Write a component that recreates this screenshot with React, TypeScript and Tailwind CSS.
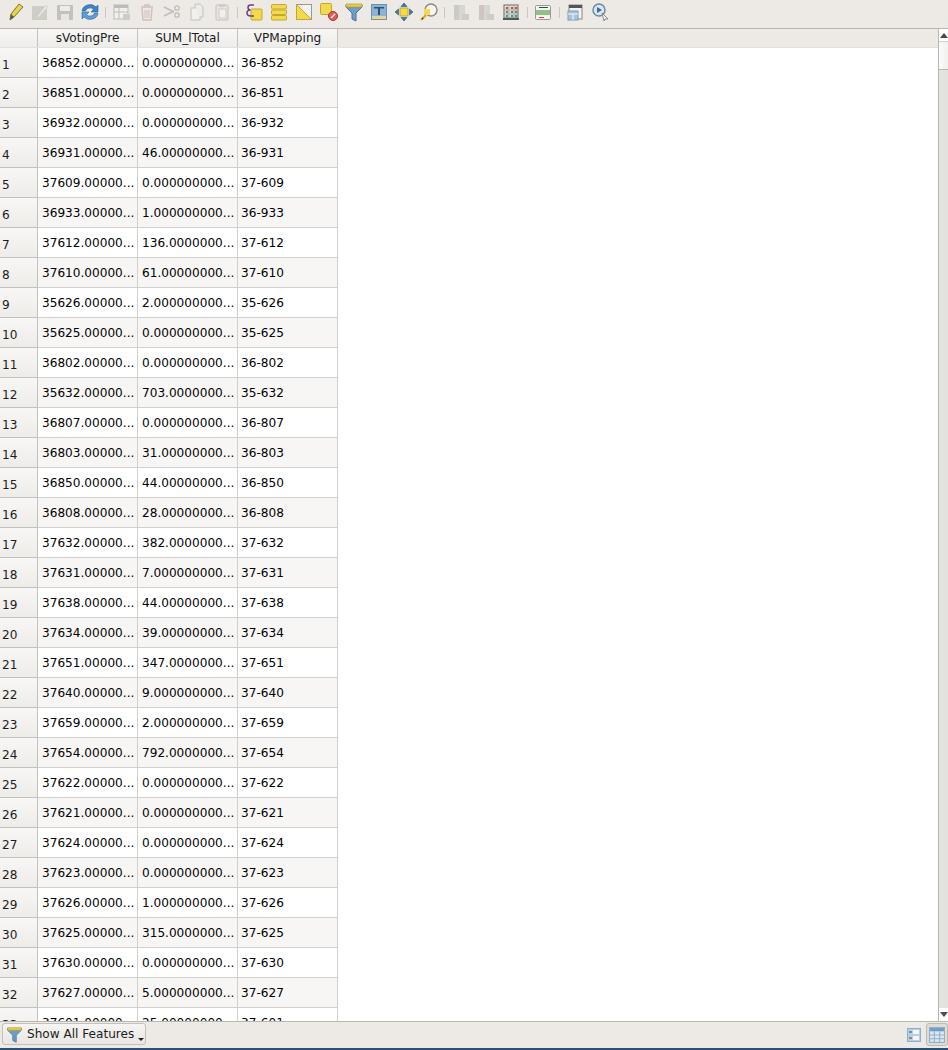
const rows = [
  ["36852.00000...", "0.000000000...", "36-852"],
  ["36851.00000...", "0.000000000...", "36-851"],
  ["36932.00000...", "0.000000000...", "36-932"],
  ["36931.00000...", "46.00000000...", "36-931"],
  ["37609.00000...", "0.000000000...", "37-609"],
  ["36933.00000...", "1.000000000...", "36-933"],
  ["37612.00000...", "136.0000000...", "37-612"],
  ["37610.00000...", "61.00000000...", "37-610"],
  ["35626.00000...", "2.000000000...", "35-626"],
  ["35625.00000...", "0.000000000...", "35-625"],
  ["36802.00000...", "0.000000000...", "36-802"],
  ["35632.00000...", "703.0000000...", "35-632"],
  ["36807.00000...", "0.000000000...", "36-807"],
  ["36803.00000...", "31.00000000...", "36-803"],
  ["36850.00000...", "44.00000000...", "36-850"],
  ["36808.00000...", "28.00000000...", "36-808"],
  ["37632.00000...", "382.0000000...", "37-632"],
  ["37631.00000...", "7.000000000...", "37-631"],
  ["37638.00000...", "44.00000000...", "37-638"],
  ["37634.00000...", "39.00000000...", "37-634"],
  ["37651.00000...", "347.0000000...", "37-651"],
  ["37640.00000...", "9.000000000...", "37-640"],
  ["37659.00000...", "2.000000000...", "37-659"],
  ["37654.00000...", "792.0000000...", "37-654"],
  ["37622.00000...", "0.000000000...", "37-622"],
  ["37621.00000...", "0.000000000...", "37-621"],
  ["37624.00000...", "0.000000000...", "37-624"],
  ["37623.00000...", "0.000000000...", "37-623"],
  ["37626.00000...", "1.000000000...", "37-626"],
  ["37625.00000...", "315.0000000...", "37-625"],
  ["37630.00000...", "0.000000000...", "37-630"],
  ["37627.00000...", "5.000000000...", "37-627"],
  ["37601.00000...", "25.00000000...", "37-601"],
];

const Svg = ({ children, dim }: { children: React.ReactNode; dim?: boolean }) => (
  <div className={dim ? "flex h-6 w-[25px] shrink-0 items-center justify-center opacity-30" : "flex h-6 w-[25px] shrink-0 items-center justify-center"}>
    <svg width="20" height="20" viewBox="0 0 20 20" fill="none">
      {children}
    </svg>
  </div>
);

const Sep = () => <div className="mt-[7px] mr-[3.2px] ml-[3px] h-[11px] w-[1px] shrink-0 bg-[#c9c6c1]" />;

const Yellow = "#f2d94e";
const YellowEdge = "#c2a92c";

const FunnelIcon = ({ size = 20 }: { size?: number }) => (
  <svg width={size} height={size} viewBox="0 0 20 20" fill="none">
    <path d="M2 3h16v2l-6 6v8l-4-2v-6L2 5z" fill="#6f9dc4" stroke="#4a7298" strokeWidth="1" />
    <path d="M2 2h16v3H2z" fill="#e9cd4a" stroke="#b49a2c" strokeWidth="0.7" />
  </svg>
);

const Toolbar = () => (
  <div className="flex h-7 items-start bg-[#edeae6] pl-[2px]">
    <Svg>
      <path d="M5 18l1-6L14 2l4 3-9 10z" fill="#e8d44c" stroke="#77733a" strokeWidth="1" />
      <path d="M5 18l1-6 3 3z" fill="#5a5a52" />
    </Svg>
    <Svg dim>
      <rect x="2" y="4" width="15" height="14" fill="#8a8f7a" />
      <path d="M7 17l1-4 8-10 2 2-8 9z" fill="#ddd" stroke="#777" strokeWidth="0.5" />
    </Svg>
    <Svg dim>
      <rect x="2" y="3" width="16" height="15" rx="1" fill="#666" />
      <rect x="5" y="4" width="10" height="5" fill="#eee" />
      <rect x="6" y="12" width="8" height="6" fill="#ddd" />
    </Svg>
    <Svg>
      <path d="M2 9a8 7 0 0 1 14-4l2-2v7h-7l2.500-2.500a4.500 4 0 0 0-8 1.500z" fill="#3f83c4" stroke="#2a6299" strokeWidth="0.6" />
      <path d="M18 11a8 7 0 0 1-14 4l-2 2v-7h7l-2.500 2.500a4.500 4 0 0 0 8-1.500z" fill="#5d9fd8" stroke="#2a6299" strokeWidth="0.6" />
    </Svg>
    <Sep />
    <Svg dim>
      <rect x="2" y="3" width="14" height="14" fill="#fff" stroke="#555" />
      <rect x="2" y="3" width="14" height="3" fill="#555" />
      <path d="M2 10h14M7 6v11" stroke="#555" />
      <rect x="11" y="12" width="7" height="6" fill="#888" />
    </Svg>
    <Svg dim>
      <path d="M4 5h12M8 5V3h4v2M5 6l1 12h8l1-12" stroke="#9a5a5a" strokeWidth="1.400" />
      <path d="M8 8v8M10 8v8M12 8v8" stroke="#9a5a5a" />
    </Svg>
    <Svg dim>
      <path d="M2 5l10 5M2 14l10-5" stroke="#555" strokeWidth="1.400" />
      <circle cx="15" cy="6" r="2.200" stroke="#555" strokeWidth="1.300" />
      <circle cx="15" cy="13" r="2.200" stroke="#555" strokeWidth="1.300" />
    </Svg>
    <Svg dim>
      <rect x="4" y="6" width="9" height="12" fill="#fff" stroke="#666" />
      <path d="M8 6V2h5l3 3v10h-3" fill="#eee" stroke="#666" />
    </Svg>
    <Svg dim>
      <rect x="4" y="3" width="12" height="15" rx="1" fill="#ddd" stroke="#666" />
      <rect x="7" y="2" width="6" height="3" fill="#888" />
      <rect x="7" y="7" width="7" height="9" fill="#fff" stroke="#888" />
    </Svg>
    <Sep />
    <Svg>
      <rect x="7" y="7" width="11" height="11" rx="1" fill={Yellow} stroke={YellowEdge} />
      <path d="M10 3H6.500Q4 3 4 5.500t2.500 2.500Q3 8 3 11t4 3h3" stroke="#6b3f8f" strokeWidth="1.500" />
    </Svg>
    <Svg>
      <rect x="2.500" y="2.500" width="15" height="4.500" rx="1" fill={Yellow} stroke={YellowEdge} />
      <rect x="2.500" y="8" width="15" height="4.500" rx="1" fill={Yellow} stroke={YellowEdge} />
      <rect x="2.500" y="13.500" width="15" height="4.500" rx="1" fill={Yellow} stroke={YellowEdge} />
    </Svg>
    <Svg>
      <rect x="2.500" y="2.500" width="15" height="15" fill="#f4f2ee" stroke="#9a9a94" />
      <path d="M2.500 2.500l15 15h-15z" fill={Yellow} stroke={YellowEdge} />
    </Svg>
    <Svg>
      <rect x="1.500" y="1.500" width="11" height="11" rx="1" fill={Yellow} stroke={YellowEdge} />
      <circle cx="14" cy="14" r="4.500" fill="#e25a5a" stroke="#b03030" />
      <path d="M12 16l4-4" stroke="#fff" strokeWidth="1.200" />
    </Svg>
    <Svg>
      <path d="M2 3h16v2l-6 6v8l-4-2v-6L2 5z" fill="#6f9dc4" stroke="#4a7298" />
      <path d="M2 2h16v3H2z" fill="#e9cd4a" stroke="#b49a2c" strokeWidth="0.7" />
    </Svg>
    <Svg>
      <rect x="2.500" y="2.500" width="15" height="15" fill="#8db3d3" stroke="#6a93b5" />
      <rect x="3" y="14" width="14" height="3" fill="#e5d88a" />
      <path d="M5 5h10v1.500H11V13H9V6.500H5z" fill="#2f4f6f" />
    </Svg>
    <Svg>
      <rect x="6" y="6" width="8" height="8" fill={Yellow} stroke={YellowEdge} />
      <path d="M10 1l3 3.500H7zM10 19l3-3.500H7zM1 10l3.500-3v6zM19 10l-3.500-3v6z" fill="#3f78ad" stroke="#2a5a88" strokeWidth="0.6" />
    </Svg>
    <Svg>
      <circle cx="12" cy="8" r="6" fill="#f7f5ee" stroke="#8a8a84" strokeWidth="1.400" />
      <rect x="5" y="7" width="6" height="6" fill={Yellow} />
      <path d="M7 13l-5 5" stroke="#c9a92c" strokeWidth="2.200" />
      <path d="M3 16l1 1" stroke="#333" strokeWidth="1.500" />
    </Svg>
    <Sep />
    <Svg dim>
      <rect x="3" y="3" width="5" height="15" fill="#7a8a70" />
      <rect x="8" y="3" width="6" height="15" fill="#a9a9a0" />
      <rect x="11" y="12" width="7" height="6" fill="#888" />
    </Svg>
    <Svg dim>
      <rect x="3" y="3" width="5" height="15" fill="#8a7070" />
      <rect x="8" y="3" width="6" height="15" fill="#a9a9a0" />
      <rect x="11" y="12" width="7" height="6" fill="#888" />
    </Svg>
    <Svg>
      <rect x="3" y="3" width="14" height="13" fill="#eeeae2" stroke="#666" />
      <rect x="2" y="16" width="16" height="2" fill="#555" />
      <path d="M8 3v13M13 3v13M3 8h14M3 12h14" stroke="#888" strokeWidth="0.6" />
      <circle cx="6" cy="6" r="1.300" fill="#c94a4a" />
      <circle cx="11" cy="6" r="1.300" fill="#c94a4a" />
      <circle cx="15" cy="6" r="1.300" fill="#c94a4a" />
      <circle cx="6" cy="10" r="1.300" fill="#5a9a5a" />
      <circle cx="11" cy="10" r="1.300" fill="#4a8ac0" />
      <circle cx="15" cy="10" r="1.300" fill="#5a9a5a" />
      <circle cx="6" cy="14" r="1.300" fill="#4a8ac0" />
      <circle cx="11" cy="14" r="1.300" fill="#5a9a5a" />
      <circle cx="15" cy="14" r="1.300" fill="#4a8ac0" />
    </Svg>
    <Sep />
    <Svg>
      <rect x="2.500" y="3.500" width="15" height="14" rx="1" fill="#f5f3ef" stroke="#999" />
      <rect x="3" y="8" width="14" height="5" fill="#8fc08a" />
      <path d="M6 5.500h9" stroke="#444" />
      <path d="M6 15.500h5" stroke="#d04040" />
    </Svg>
    <Sep />
    <Svg>
      <rect x="4" y="3" width="13" height="14" fill="#f5f3ef" stroke="#888" />
      <rect x="4" y="3" width="13" height="3" fill="#555" />
      <rect x="3" y="9" width="10" height="9" fill="#a9c4dc" stroke="#7a9dbb" />
      <path d="M3 12h10M8 12v6" stroke="#f5f3ef" />
    </Svg>
    <Svg>
      <circle cx="9" cy="8" r="6" fill="#dde6ee" stroke="#6a8aa5" strokeWidth="1.500" />
      <path d="M7 5l5 3-5 3z" fill="#2f6fa5" />
      <path d="M12 11l6 6-3 0-1 2z" fill="#f5f5f5" stroke="#777" strokeWidth="0.8" />
    </Svg>
  </div>
);

const HeaderCell = ({ label, w }: { label: string; w: string }) => (
  <div className={`flex h-[18px] ${w} shrink-0 items-center justify-center border-r border-[#c4c2be] bg-gradient-to-b from-[#f8f7f5] to-[#eeece9] pt-[1px] text-[#1c1c1c]`}>
    {label}
  </div>
);

const Row = ({ n, row }: { n: number; row: string[] }) => (
  <div className={n % 2 === 0 ? "flex h-[30px] w-[338px] shrink-0 bg-[#f7f6f5]" : "flex h-[30px] w-[338px] shrink-0 bg-white"}>
    <div className="flex w-[38px] shrink-0 items-center border-r border-b border-[#c4c2be] bg-gradient-to-b from-[#f8f7f5] to-[#eeece9] pt-[5px] pl-[2px]">
      {n}
    </div>
    {row.map((c, i) => (
      <div
        key={i}
        className={
          i === 2
            ? "flex w-[100px] shrink-0 items-center whitespace-nowrap border-r border-b border-[#d2d0cd] pt-[1px] pl-[3px] text-black"
            : "flex w-[100px] shrink-0 items-center whitespace-nowrap border-r border-b border-[#d2d0cd] pt-[1px] pl-[4px] text-black"
        }
      >
        {c}
      </div>
    ))}
  </div>
);

export default function App() {
  return (
    <div className="flex h-[1050px] w-[948px] flex-col overflow-hidden bg-white font-['DejaVu_Sans',sans-serif] text-[12.1px] text-[#1c1c1c]">
      <Toolbar />
      <div className="flex min-h-0 flex-1 border-t border-[#b9b6b1]">
        <div className="flex min-w-0 flex-1 flex-col overflow-hidden border-r border-[#b9b6b1]">
          <div className="flex shrink-0 border-b border-[#e4e2de] bg-[#edeae6]">
            <HeaderCell label="" w="w-[38px]" />
            <HeaderCell label="sVotingPre" w="w-[100px]" />
            <HeaderCell label="SUM_lTotal" w="w-[100px]" />
            <HeaderCell label="VPMapping" w="w-[100px]" />
          </div>
          {rows.map((r, i) => (
            <Row key={i} n={i + 1} row={r} />
          ))}
        </div>
        <div className="flex w-[9px] shrink-0 flex-col bg-[#e3e2de]">
          <div className="flex h-[13px] shrink-0 items-center justify-center border-b border-[#d0cec9] bg-white">
            <div className="h-0 w-0 border-x-[4px] border-b-[5px] border-x-transparent border-b-[#4a4a4a]" />
          </div>
          <div className="h-[28px] shrink-0 border-b border-[#b9b6b1] bg-gradient-to-r from-[#fafafa] to-[#f1f0ee]" />
          <div className="flex-1" />
          <div className="flex h-[13px] shrink-0 items-center justify-center bg-white">
            <div className="h-0 w-0 border-x-[4px] border-t-[5px] border-x-transparent border-t-[#4a4a4a]" />
          </div>
        </div>
      </div>
      <div className="flex h-[27px] shrink-0 items-start justify-between border-t border-[#b9b6b1] bg-[#edeae6] pt-[1px]">
        <div className="ml-[2px] flex h-[22px] w-[144px] items-center rounded-[3px] border border-[#c4c1bc] bg-gradient-to-b from-[#f6f5f3] to-[#e9e6e2] pl-[3px]">
          <FunnelIcon size={17} />
          <span className="ml-[4px]">Show All Features</span>
          <div className="mt-[10px] ml-[4px] h-0 w-0 border-x-[3px] border-t-[3px] border-x-transparent border-t-[#222]" />
        </div>
        <div className="flex items-center">
          <div className="mr-[2px] flex h-[22px] w-[20px] items-center justify-center">
            <svg width="14" height="14" viewBox="0 0 14 14" fill="none">
              <rect x="0.500" y="0.500" width="13" height="13" fill="#b8cfe2" stroke="#8fb0cc" />
              <rect x="6" y="2" width="6" height="4" fill="#f5f5f5" />
              <rect x="6" y="8" width="6" height="4" fill="#f5f5f5" />
              <path d="M2 4h3M2 10h3" stroke="#3f4f5c" strokeWidth="1.200" />
            </svg>
          </div>
          <div className="flex h-[23px] w-[22px] items-center justify-center rounded-[3px] border border-[#bdbab5] bg-[#dfdcd8]">
            <svg width="16" height="16" viewBox="0 0 15 15" fill="none">
              <rect x="0.500" y="0.500" width="14" height="14" fill="#dbe7f1" stroke="#8fb0cc" />
              <rect x="1" y="1" width="13" height="3" fill="#6f9cc2" />
              <path d="M1 7.500h13M1 11h13M5 4v10M10 4v10" stroke="#8fb0cc" />
            </svg>
          </div>
        </div>
      </div>
      <div className="h-[2px] shrink-0 bg-[#26527a]" />
    </div>
  );
}
